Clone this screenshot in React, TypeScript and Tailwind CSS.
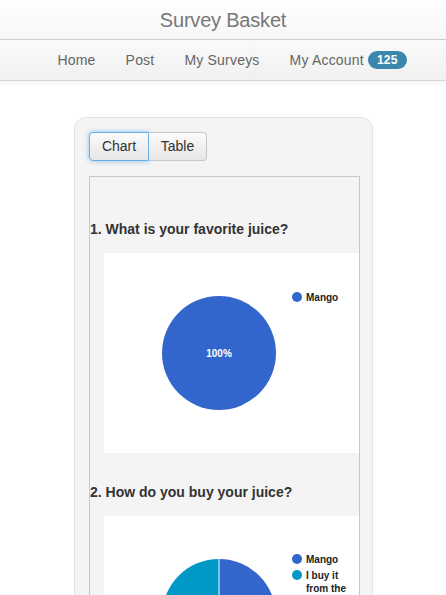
const navItems = ['Home', 'Post', 'My Surveys']

function Legend({ items }: { items: { color: string; label: string }[] }) {
  return (
    <div className="flex flex-col gap-[3px] w-[58px]">
      {items.map((it) => (
        <div key={it.label} className="flex items-start gap-[4px]">
          <span className="mt-[1px] w-[10px] h-[10px] rounded-full shrink-0" style={{ background: it.color }} />
          <span className="text-[10px] leading-[13px] font-bold text-[#222]">{it.label}</span>
        </div>
      ))}
    </div>
  )
}

function Question({ title, children }: { title: string; children: React.ReactNode }) {
  return (
    <div>
      <h3 className="text-[14px] leading-[20px] font-bold text-[#333]">{title}</h3>
      <div className="mt-[14px] ml-[14px] w-[270px] h-[200px] bg-white flex">{children}</div>
    </div>
  )
}

export default function App() {
  return (
    <div className="w-[446px] h-[595px] overflow-hidden bg-white font-['Helvetica','Liberation_Sans',Arial,sans-serif]">
      {/* Header */}
      <header className="h-[40px] flex items-center justify-center bg-gradient-to-b from-white to-[#f7f7f7] border-b border-[#d0d0d0]">
        <span className="text-[20px] font-light text-[#777] tracking-[-0.2px]">Survey Basket</span>
      </header>

      {/* Nav */}
      <nav className="h-[41px] flex items-center justify-center gap-[30px] bg-gradient-to-b from-[#fafafa] to-[#f0f0f0] border-b border-[#d4d4d4] shadow-[0_2px_6px_rgba(0,0,0,0.06)] text-[14px] tracking-[0.2px] text-[#666] pl-[18px]">
        {navItems.map((n) => (
          <span key={n}>{n}</span>
        ))}
        <span className="flex items-center gap-[4px]">
          My Account
          <span className="px-[9px] h-[18px] leading-[18px] rounded-full bg-[#3a87ad] text-white text-[12px] font-bold">125</span>
        </span>
      </nav>

      {/* Card */}
      <main className="pt-[36px] pl-[74px]">
        <div className="w-[299px] h-[500px] bg-[#f4f4f4] border border-[#e4e4e4] rounded-[12px] pt-[14px] pl-[14px]">
          <div className="flex">
            <button className="w-[60px] h-[29px] text-[14px] text-[#333] bg-gradient-to-b from-[#fbfbfb] to-[#e6e6e6] border border-[#66afe9] rounded-l-[4px] shadow-[0_0_5px_rgba(102,175,233,0.8)]">
              Chart
            </button>
            <button className="w-[58px] h-[29px] text-[14px] text-[#333] bg-gradient-to-b from-[#fbfbfb] to-[#e6e6e6] border border-l-0 border-[#c8c8c8] rounded-r-[4px]">
              Table
            </button>
          </div>

          <div className="mt-[15px] w-[271px] h-[430px] border border-[#c8c8c8] overflow-hidden pt-[42px] flex flex-col gap-[29px]">
            <Question title="1. What is your favorite juice?">
              <svg width="188" height="200" className="shrink-0">
                <circle cx="115" cy="100" r="57" fill="#3366cc" />
                <text x="115" y="104" textAnchor="middle" fill="#fff" fontSize="10" fontWeight="bold" fontFamily="Arial, sans-serif">
                  100%
                </text>
              </svg>
              <div className="pt-[38px]">
                <Legend items={[{ color: '#3366cc', label: 'Mango' }]} />
              </div>
            </Question>

            <Question title="2. How do you buy your juice?">
              <svg width="188" height="200" className="shrink-0">
                <path d="M115 43 A57 57 0 0 1 115 157 Z" fill="#3366cc" />
                <path d="M115 43 A57 57 0 0 0 115 157 Z" fill="#0099c6" />
                <line x1="115" y1="43" x2="115" y2="157" stroke="#fff" strokeWidth="1" />
              </svg>
              <div className="pt-[37px]">
                <Legend
                  items={[
                    { color: '#3366cc', label: 'Mango' },
                    { color: '#0099c6', label: 'I buy it from the store' },
                  ]}
                />
              </div>
            </Question>
          </div>
        </div>
      </main>
    </div>
  )
}
